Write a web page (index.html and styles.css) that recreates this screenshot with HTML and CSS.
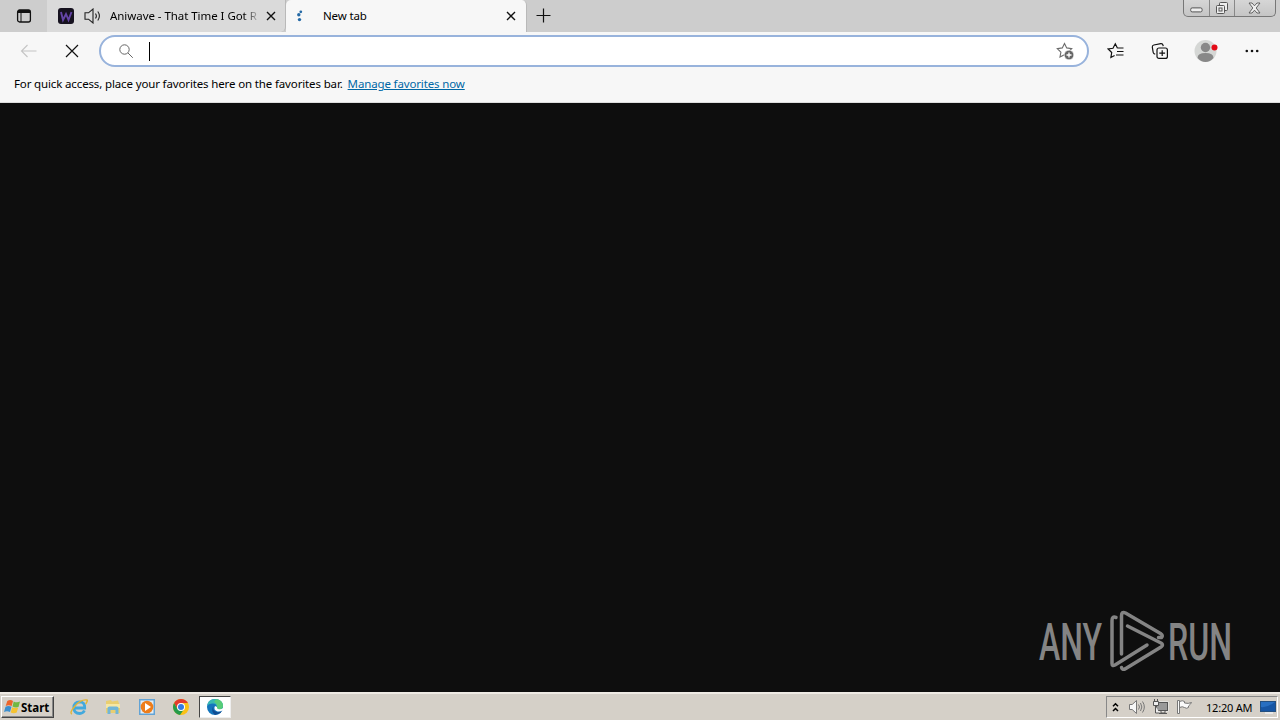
FILE: index.html
```html
<!DOCTYPE html>
<html lang="en">
<head>
    <meta charset="UTF-8">
    <meta name="viewport" content="width=device-width, initial-scale=1.0">
    <title>New tab</title>
    <link rel="stylesheet" href="styles.css">
</head>
<body>
    <header class="tab-strip">
        <div class="tab-menu">
            <svg width="16" height="16" viewBox="0 0 16 16" fill="none" stroke="#111"><rect x="1.6" y="2" width="12.8" height="12" rx="2" stroke-width="1.3"/><path d="M2 3.5h12" stroke-width="3"/><path d="M5 4v10"/></svg>
        </div>
        <div class="tab">
            <svg class="favicon" width="16" height="16" viewBox="0 0 16 16"><rect width="16" height="16" rx="3" fill="#16121f"/><path d="M3 4l2 8 3-6 2.500 6L13.500 4" fill="none" stroke="#6445a6" stroke-width="1.900"/></svg>
            <svg class="sound" width="18" height="16" viewBox="0 0 18 16" fill="none" stroke="#222" stroke-width="1.100"><path d="M1 4.800h3.500L9 1v14L4.500 11.200H1z"/><path d="M11.500 5.500q1.800 2.500 0 5M13.800 3.500q3.200 4.500 0 9"/></svg>
            <span class="tab-title fade">Aniwave - That Time I Got R</span>
            <svg class="close" width="10" height="10" viewBox="0 0 10 10"><path d="M1 1l8 8M9 1L1 9" stroke="#111" stroke-width="1.400"/></svg>
        </div>
        <div class="tab active">
            <svg class="spinner" width="8" height="12" viewBox="0 0 8 12" fill="#2469a5"><circle cx="4.800" cy="1.800" r="1.400"/><circle cx="2.800" cy="4.800" r="1.700"/><circle cx="3.500" cy="9.600" r="1.700"/></svg>
            <span class="tab-title">New tab</span>
            <svg class="close" width="10" height="10" viewBox="0 0 10 10"><path d="M1 1l8 8M9 1L1 9" stroke="#111" stroke-width="1.400"/></svg>
        </div>
        <svg class="new-tab" width="15" height="15" viewBox="0 0 15 15"><path d="M7.500 .5v14M.5 7.500h14" stroke="#111" stroke-width="1.200"/></svg>
        <div class="window-controls">
            <span class="minimize"><svg width="13" height="6" viewBox="0 0 13 6"><rect x=".7" y=".9" width="11.400" height="4" rx="1.500" fill="#eee" stroke="#555"/></svg></span>
            <span class="restore"><svg width="14" height="14" viewBox="0 0 14 14" fill="#eee" stroke="#555"><rect x="4.500" y="1.500" width="8" height="8" rx="1"/><rect x="1.500" y="4.500" width="8" height="8" rx="1"/><rect x="4" y="7" width="3" height="3"/></svg></span>
            <span class="quit"><svg width="13" height="12" viewBox="0 0 13 12"><path d="M1 1h3l2.500 2.800L9 1h3L8.200 6 12 11H9L6.500 8.200 4 11H1l3.800-5z" fill="#eee" stroke="#555" stroke-width=".9"/></svg></span>
        </div>
    </header>

    <nav class="toolbar">
        <svg class="back" width="17" height="14" viewBox="0 0 17 14"><path d="M7.500 1L1.500 7l6 6M1.500 7h15" fill="none" stroke="#c4c4c4" stroke-width="1.100"/></svg>
        <svg class="stop" width="14" height="14" viewBox="0 0 14 14"><path d="M1 1l12 12M13 1L1 13" stroke="#111" stroke-width="1.200"/></svg>
        <div class="address-bar">
            <svg class="search" width="16" height="16" viewBox="0 0 16 16" fill="none" stroke="#666"><circle cx="6.500" cy="6.500" r="4.700"/><path d="M10 10l4.800 4.800"/></svg>
            <span class="caret"></span>
            <svg class="add-favorite" width="18" height="18" viewBox="0 0 18 18"><path d="M8.500 1.400l2.200 4.500 5 .7-3.600 3.500.9 5-4.500-2.400L4 15.100l.9-5L1.300 6.600l5-.7z" fill="none" stroke="#6b6b6b" stroke-width="1.100"/><circle cx="13" cy="13" r="4.800" fill="#666" stroke="#fff" stroke-width=".6"/><path d="M13 10.500v5M10.500 13h5" stroke="#fff" stroke-width="1.300"/></svg>
        </div>
        <svg class="favorites" width="18" height="18" viewBox="0 0 18 18" fill="none" stroke="#111" stroke-width="1.200"><path d="M10.500 6.200L8.300 1.800 6 6.300l-4.800.7 3.500 3.500-.8 5 3.700-2M10.500 6h6M10 9.500h6.500M9 13h7.500"/></svg>
        <svg class="collections" width="18" height="18" viewBox="0 0 18 18" fill="none" stroke="#111" stroke-width="1.200"><path d="M4.200 12.200Q2.500 12 2.200 10.500L1.300 5.100Q1.100 3.300 2.800 3l7-1.300q1.800-.2 2.200 1.500l.2 1"/><rect x="6" y="6" width="10.400" height="10.400" rx="2"/><path d="M11.200 8.300v5.800M8.300 11.200h5.800"/></svg>
        <svg class="profile" width="24" height="24" viewBox="0 0 24 24"><circle cx="11.500" cy="12" r="11" fill="#d5d7d5"/><circle cx="11.500" cy="8.500" r="4.700" fill="#888"/><path d="M3.500 19q0-5 8-5t8 5q-3.500 4-8 4t-8-4z" fill="#888"/><circle cx="20.500" cy="8.500" r="3" fill="#e30b17"/></svg>
        <svg class="more" width="14" height="4" viewBox="0 0 14 4" fill="#111"><circle cx="1.800" cy="2" r="1.300"/><circle cx="7" cy="2" r="1.300"/><circle cx="12.200" cy="2" r="1.300"/></svg>
    </nav>

    <div class="favorites-bar">
        <span class="hint">For quick access, place your favorites here on the favorites bar.</span>
        <a href="#">Manage favorites now</a>
    </div>

    <main class="page">
        <svg class="watermark" width="196" height="64" viewBox="0 0 196 64">
            <g class="wordmark">
                <text x="1" y="50.500" textLength="63" lengthAdjust="spacingAndGlyphs">ANY</text>
                <text x="130" y="50.500" textLength="64" lengthAdjust="spacingAndGlyphs">RUN</text>
            </g>
            <g fill="none" stroke="#848484" stroke-width="3.500" stroke-linejoin="round" stroke-linecap="round">
                <path d="M78 8.500q-4-1.500-4 3v43q0 3 3 1.500L109 36"/>
                <path d="M83.500 45V7q0-5 4-3l35 20.500q3 2 1 4h-3"/>
                <path d="M89.500 17L123 34q3 2 0 4L87 60q-3 1-3.500-1.500"/>
            </g>
        </svg>
    </main>

    <footer class="taskbar">
        <div class="start">
            <svg width="17" height="16" viewBox="0 0 17 16"><path d="M3.300 2q3-2 5.700 0L7.700 7Q4.500 5.500 1.700 7z" fill="#ed652a"/><path d="M9.700 2.400q3 1.600 6.300.2L14.500 8q-3 1-6-.5z" fill="#72b842"/><path d="M1.500 7.800q3-1.500 6 0L6 13q-3-1.500-6 0z" fill="#3c8fce"/><path d="M8.200 8.200q3 1.500 6 .2l-1.500 5q-3 1.500-6 0z" fill="#f5c332"/></svg>
            <span>Start</span>
        </div>
        <div class="quick-launch">
            <svg width="18" height="18" viewBox="0 0 18 18" fill="none"><path d="M4.500 10h10.200Q15 4 9.500 3.800 4 4 3.800 9.500q.2 6 6 6 3.200 0 4.600-3" stroke="#43a9dd" stroke-width="2.800"/><path d="M2 16Q-1 15 5 8t12-6q1 .5-1.300 4" stroke="#e3b534" stroke-width="1.400"/></svg>
            <svg width="18" height="18" viewBox="0 0 18 18"><path d="M2 3l5-1 1 1.500 6-1 1 3 1 1V15H2z" fill="#e9ce70"/><path d="M2 6h14v4H2z" fill="#f6e7a4"/><path d="M3.500 16V10q0-1.500 2-1.500h7q2 0 2 1.500v6h-3v-4h-5v4z" fill="#72b6d7"/></svg>
            <svg width="18" height="18" viewBox="0 0 18 18"><rect x="1" y="1" width="16" height="16" fill="#62a3d5"/><rect x="2.500" y="2.500" width="13" height="13" fill="#e3edf5"/><circle cx="9" cy="9" r="6.300" fill="#ed7d1b"/><path d="M7 5l6 4-6 4z" fill="#fff"/></svg>
            <svg width="18" height="18" viewBox="0 0 18 18"><circle cx="9" cy="9" r="8" fill="#fbc116"/><path d="M2.100 5A8 8 0 0 1 15.900 5H9L5.500 11z" fill="#e33b2e"/><path d="M2.100 5A8 8 0 0 0 8 17l4.500-6.500-7 .5z" fill="#269b4b"/><circle cx="9" cy="9" r="4" fill="#fff"/><circle cx="9" cy="9" r="3" fill="#357be3"/></svg>
            <span class="running"><svg width="18" height="18" viewBox="0 0 18 18"><circle cx="9" cy="9" r="8" fill="#1475bc"/><path d="M1.200 8Q2 1 9 1q7 0 8 6.500 0 4-4.200 4-3 0-2-2Q11 5.500 6.700 5.500 2.500 5.500 1.200 8z" fill="#38b9b1"/><path d="M10 1.200q6.500.5 7 6.300 0 4-4.200 4-3 0-2-2Q12 6 8 4z" fill="#57cc78"/><path d="M8 7Q5 12 10.500 14q3 1 5.500-1.500L14.500 15 9 17Q4 13 8 7z" fill="#124d92"/><path d="M9 8Q7 12 11.500 13.500q3 .5 5.500-1.500l1-1-1-1Q15 12 12 11q-1.500-.5-1-2z" fill="#fff"/></svg></span>
        </div>
        <div class="tray">
            <svg class="chevrons" width="7" height="11" viewBox="0 0 7 11"><path d="M1 4.200l2.500-2.500L6 4.200M1 9l2.500-2.500L6 9" fill="none" stroke="#000" stroke-width="1.500"/></svg>
            <svg class="volume" width="18" height="16" viewBox="0 0 18 16" fill="none" stroke="#777"><path d="M1.500 5.500h2.700L8.500 1.500v13L4.200 10.500H1.500z" fill="#f7f7f7"/><path d="M10.500 5.500q2 2.500 0 5M12.500 4q2.700 4 0 8M14.500 2.500q3.700 5.500 0 11"/></svg>
            <svg class="network" width="17" height="16" viewBox="0 0 17 16"><rect x="4.500" y="3.500" width="11" height="8" fill="#aaa" stroke="#f4f4f4" stroke-width="2"/><rect x="4.500" y="3.500" width="11" height="8" fill="#999" stroke="#555"/><path d="M7 14.500h8M9 12v2h4v-2" fill="none" stroke="#555"/><path d="M1.500 2.500h5v4h-5zM2.500 0v2M5.500 0v2M3.500 7v7h4" fill="#eee" stroke="#555"/></svg>
            <svg class="flag" width="17" height="16" viewBox="0 0 17 16"><path d="M1.500 1.500h2v13h-2zM3.500 2.500q3-1.500 5 0v1.500q4 1 7-.5-1 2-3 3.500v1.500q-2 1.500-4 0-2-1.500-5 0z" fill="#fafafa" stroke="#777"/></svg>
            <span class="clock">12:20 AM</span>
            <svg class="desktop" width="16" height="13" viewBox="0 0 16 13"><rect x=".5" y=".5" width="15" height="10" fill="#286fc1" stroke="#245080"/><path d="M1 6Q7 7 15 1v9H1z" fill="#1756a4"/><path d="M5 12h8" stroke="#e8e8e8" stroke-width="2"/></svg>
        </div>
    </footer>
</body>
</html>
```
FILE: styles.css
```css
* {
    box-sizing: border-box;
}
body {
    margin: 0;
    width: 1280px;
    height: 720px;
    display: flex;
    flex-direction: column;
    overflow: hidden;
    font-family: "Noto Sans", sans-serif;
    font-size: 11.5px;
    color: #000;
    background: #0e0e0e;
}
svg {
    display: block;
    flex-shrink: 0;
}
.tab-strip {
    height: 32px;
    display: flex;
    background: #cdcdcd;
}
.tab-menu {
    width: 47px;
    padding: 8px 0 0 16px;
}
.tab {
    width: 239px;
    height: 32px;
    display: flex;
    align-items: center;
    padding: 0 9px 0 11px;
    background: #dadada;
    border-right: 1px solid #b9b9b9;
    border-radius: 0 0 5px 0;
}
.tab.active {
    width: 241px;
    padding-left: 10px;
    padding-right: 10px;
    background: #f7f7f7;
    border-radius: 5px 5px 0 0;
}
.sound {
    margin: 0 8px 0 10px;
}
.tab-title {
    flex: 1;
    padding-bottom: 2px;
    white-space: nowrap;
    overflow: hidden;
    letter-spacing: -0.05px;
}
.fade {
    background: linear-gradient(90deg, #000 134px, #bbb 148px);
    background-clip: text;
    color: transparent;
}
.active .tab-title {
    letter-spacing: -0.14px;
}
.spinner {
    margin-right: 19px;
}
.new-tab {
    margin: 8px 0 0 9px;
}
.window-controls {
    display: flex;
    width: 93px;
    height: 17px;
    margin-left: auto;
    margin-right: 4px;
    border: 1px solid #777;
    border-top: 0;
    border-radius: 0 0 5px 5px;
    background: linear-gradient(#d6d6d6, #c5c5c5);
}
.window-controls span {
    display: flex;
    align-items: center;
    justify-content: center;
}
.minimize {
    width: 25px;
    padding-top: 4px;
}
.restore {
    width: 26px;
    border: solid #888;
    border-width: 0 1px;
}
.window-controls .quit {
    flex: 1;
    padding-right: 2px;
}
.toolbar {
    height: 38px;
    display: flex;
    align-items: center;
    background: #f7f7f7;
}
.back {
    margin-left: 20px;
}
.stop {
    margin-left: 28px;
}
.address-bar {
    width: 990px;
    height: 32px;
    display: flex;
    align-items: center;
    margin-left: 20px;
    padding: 0 13px 0 17px;
    border: 2px solid #98b3dc;
    border-radius: 16px;
    background: #fff;
}
.caret {
    width: 1px;
    height: 19px;
    margin-left: 15px;
    background: #000;
}
.add-favorite {
    margin-left: auto;
}
.favorites {
    margin-left: 18px;
}
.collections {
    margin-left: 26px;
}
.profile {
    margin-left: 25px;
}
.more {
    margin-left: 27px;
}
.favorites-bar {
    height: 33px;
    display: flex;
    align-items: center;
    gap: 5px;
    padding: 0 0 5px 14px;
    background: #f7f7f7;
    border-bottom: 1px solid #ddd;
    white-space: nowrap;
    letter-spacing: -0.14px;
}
.favorites-bar a {
    color: #0067a5;
    text-underline-offset: 1px;
}
.page {
    flex: 1;
    display: flex;
    align-items: flex-end;
    justify-content: flex-end;
    padding: 0 46px 19px 0;
    background: #0e0e0e;
}
.watermark {
    overflow: visible;
}
.wordmark {
    font-family: Roboto, sans-serif;
    font-size: 51px;
    font-weight: 500;
    fill: #848484;
}
.taskbar {
    height: 28px;
    display: flex;
    align-items: center;
    padding: 1px 2px 1px 1px;
    background: #d5d0c8;
    border-top: 2px solid #eeeae4;
}
.start {
    width: 53px;
    height: 22px;
    display: flex;
    align-items: center;
    padding-left: 2px;
    border: 1px solid;
    border-color: #fff #444 #444 #fff;
    box-shadow: inset -1px -1px #888;
    font-weight: 700;
}
.quick-launch {
    display: flex;
    align-items: center;
    gap: 16px;
    margin-left: 16px;
}
.running {
    display: flex;
    align-items: center;
    justify-content: center;
    width: 32px;
    height: 22px;
    margin-left: -7px;
    background: #fff;
    border: 1px solid;
    border-color: #444 #eee #eee #444;
}
.tray {
    width: 172px;
    height: 22px;
    display: flex;
    align-items: center;
    margin-left: auto;
    padding-left: 5px;
    border: 1px solid;
    border-color: #888 #fff #fff #888;
}
.volume {
    margin-left: 9px;
}
.network {
    margin-left: 6px;
}
.flag {
    margin-left: 7px;
}
.clock {
    margin-left: 13px;
    width: 47px;
    font-size: 11px;
    letter-spacing: -0.2px;
    white-space: nowrap;
}
.desktop {
    margin-left: 7px;
}
```
